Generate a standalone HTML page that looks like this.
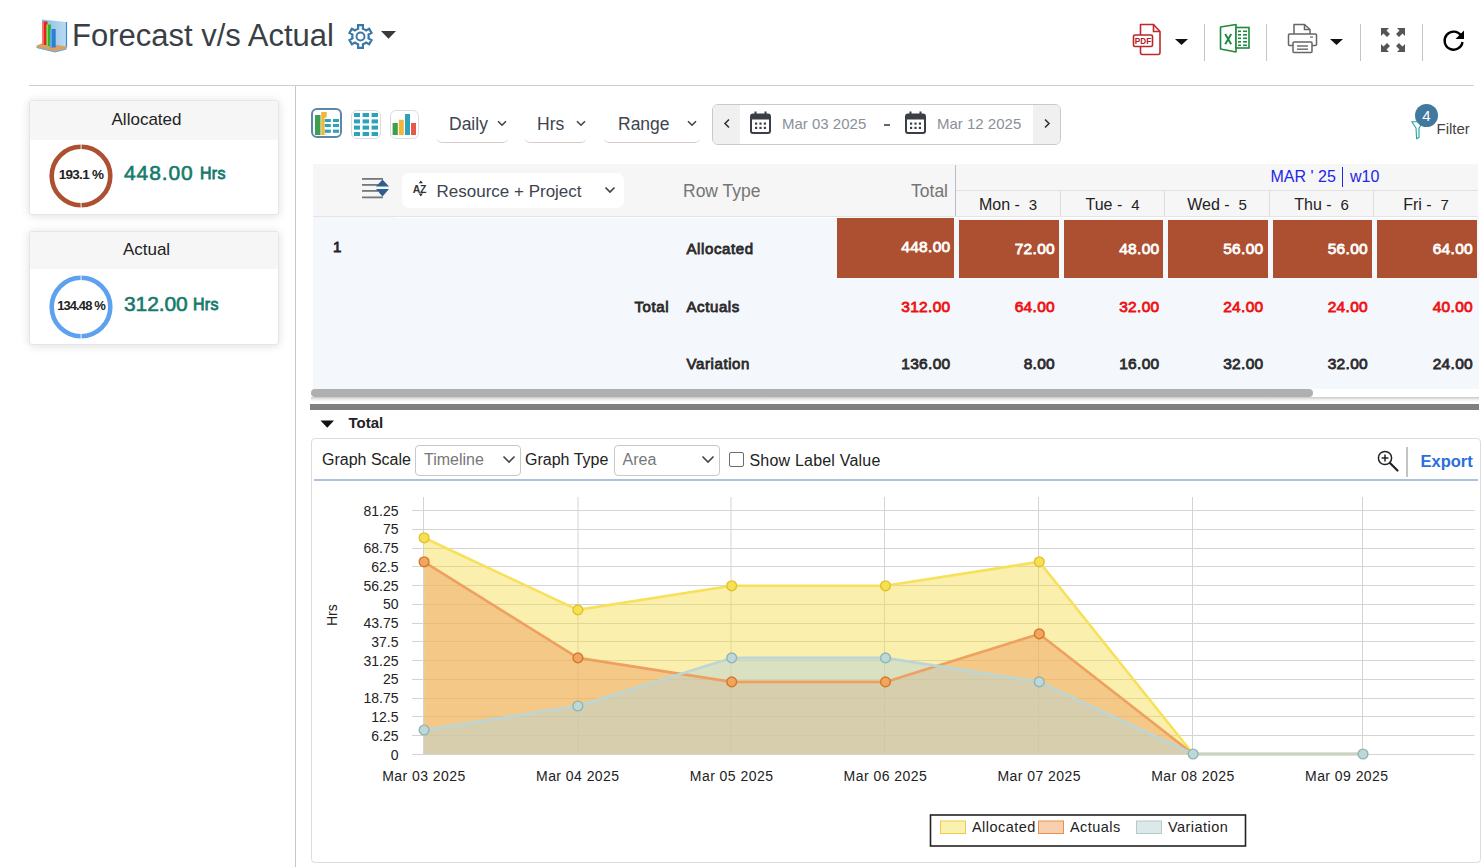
<!DOCTYPE html>
<html>
<head>
<meta charset="utf-8">
<style>
html,body{margin:0;padding:0;background:#fff;}
body{width:1482px;height:867px;position:relative;overflow:hidden;font-family:"Liberation Sans",sans-serif;color:#222;}
.a{position:absolute;}
.t{position:absolute;white-space:nowrap;line-height:1;}
.b{font-weight:bold;}
.sb{font-weight:normal;-webkit-text-stroke:0.8px currentColor;letter-spacing:0.3px;}
.r{text-align:right;}
.c{text-align:center;}
svg{position:absolute;overflow:visible;}
</style>
</head>
<body>
<!-- ===== HEADER ===== -->
<svg class="a" style="left:34px;top:18px" width="36" height="36" viewBox="0 0 36 36">
  <defs><linearGradient id="pg" x1="0" x2="1" y1="0" y2="0"><stop offset="0" stop-color="#86bbe4"/><stop offset="1" stop-color="#bddbf0"/></linearGradient></defs>
  <polygon points="8,1.5 32.5,4 32.5,29.5 8,27" fill="url(#pg)"/>
  <line x1="32.5" y1="4" x2="32.5" y2="29.5" stroke="#3a8ad0" stroke-width="1.2"/>
  <polygon points="2.5,27.5 9,25 32.5,28.5 32.5,31 21,34 2.5,29.5" fill="#d9a066"/>
  <polyline points="2.5,29.5 21,34 32.5,31" fill="none" stroke="#6aa8d8" stroke-width="1.2"/>
  <rect x="8.2" y="3.5" width="5.3" height="23.5" fill="#e8201e"/><rect x="8.2" y="3.5" width="1.6" height="23.5" fill="#ff8080"/>
  <rect x="12.5" y="6.5" width="4.5" height="21.5" fill="#33b22a"/><rect x="12.5" y="6.5" width="1.4" height="21.5" fill="#8ee06a"/>
  <rect x="16.2" y="11" width="5.5" height="18.5" fill="#2f7fd0"/><rect x="16.2" y="11" width="1.5" height="18.5" fill="#6ab4f0"/>
</svg>
<div class="t" style="left:72px;top:20px;font-size:31px;color:#3a3f47;">Forecast v/s Actual</div>
<!-- gear -->
<svg style="left:348px;top:24px" width="25" height="25" viewBox="0 0 25 25">
  <path d="M8.40 5.40 L10.10 4.66 L10.09 1.15 L14.91 1.15 L14.90 4.66 L16.60 5.40 L18.09 6.50 L21.12 4.74 L23.53 8.92 L20.49 10.66 L20.70 12.50 L20.49 14.34 L23.53 16.08 L21.12 20.26 L18.09 18.50 L16.60 19.60 L14.90 20.34 L14.91 23.85 L10.09 23.85 L10.10 20.34 L8.40 19.60 L6.91 18.50 L3.88 20.26 L1.47 16.08 L4.51 14.34 L4.30 12.50 L4.51 10.66 L1.47 8.92 L3.88 4.74 L6.91 6.50 Z" fill="none" stroke="#3a78a6" stroke-width="2.2" stroke-linejoin="miter"/>
  <circle cx="12.5" cy="12.5" r="4" fill="none" stroke="#3a78a6" stroke-width="1.9"/>
</svg>
<svg style="left:380.5px;top:31px" width="15" height="8" viewBox="0 0 15 8"><polygon points="0,0 15,0 7.5,7.8" fill="#3a3a3a"/></svg>

<!-- right icons -->
<!-- pdf -->
<svg style="left:1132px;top:23px" width="32" height="33" viewBox="0 0 32 33">
  <path d="M8.5 1.5h13l6.5 7v21a2 2 0 0 1-2 2h-15.5a2 2 0 0 1-2-2z" fill="#fff" stroke="#c0282d" stroke-width="1.6" stroke-linejoin="round"/>
  <path d="M21.5 1.5v7h6.5" fill="none" stroke="#c0282d" stroke-width="1.6"/>
  <rect x="1.5" y="12" width="19" height="11.5" rx="1.5" fill="#fff" stroke="#b8262b" stroke-width="1.6"/>
  <text x="11" y="21.3" font-family="Liberation Sans" font-weight="bold" font-size="8.2" fill="#b02025" text-anchor="middle">PDF</text>
</svg>
<svg style="left:1175px;top:39px" width="13" height="6" viewBox="0 0 13 6"><polygon points="0,0 13,0 6.5,6" fill="#111"/></svg>
<div class="a" style="left:1204px;top:24px;width:1px;height:37px;background:#c4c4c4"></div>
<!-- excel -->
<svg style="left:1219px;top:23px" width="32" height="31" viewBox="0 0 32 31">
  <polygon points="1.5,4 17,1.5 17,29 1.5,26" fill="#fff" stroke="#1e8a3e" stroke-width="1.6" stroke-linejoin="round"/>
  <rect x="17" y="4.5" width="13" height="20.5" fill="#fff" stroke="#1e8a3e" stroke-width="1.6"/>
  <path d="M6.2 11l6 10.2M12.2 11l-6 10.2" stroke="#1e8a3e" stroke-width="1.9" fill="none"/>
  <g fill="#1e8a3e"><rect x="19" y="7.5" width="3" height="1.6"/><rect x="24" y="7.5" width="4" height="1.6"/>
  <rect x="19" y="11" width="3" height="1.6"/><rect x="24" y="11" width="4" height="1.6"/>
  <rect x="19" y="14.5" width="3" height="1.6"/><rect x="24" y="14.5" width="4" height="1.6"/>
  <rect x="19" y="18" width="3" height="1.6"/><rect x="24" y="18" width="4" height="1.6"/>
  <rect x="19" y="21.5" width="3" height="1.6"/><rect x="24" y="21.5" width="4" height="1.6"/></g>
</svg>
<div class="a" style="left:1266px;top:24px;width:1px;height:37px;background:#c4c4c4"></div>
<!-- printer -->
<svg style="left:1287px;top:23px" width="31" height="31" viewBox="0 0 31 31">
  <path d="M7 11v-9.5h10.5l5.5 5v4.5" fill="#fff" stroke="#666" stroke-width="1.5" stroke-linejoin="round"/>
  <path d="M17.5 1.5v5h5.5" fill="none" stroke="#666" stroke-width="1.5"/>
  <rect x="1.5" y="11" width="28" height="11.5" rx="1" fill="#fff" stroke="#666" stroke-width="1.5"/>
  <rect x="6" y="19" width="19" height="10.5" rx="1" fill="#fff" stroke="#666" stroke-width="1.5"/>
  <rect x="10" y="22.3" width="11" height="1.4" fill="#666"/><rect x="10" y="25.5" width="11" height="1.4" fill="#666"/>
  <rect x="23" y="13.5" width="3" height="1.2" fill="#666"/>
</svg>
<svg style="left:1330px;top:39px" width="13" height="6" viewBox="0 0 13 6"><polygon points="0,0 13,0 6.5,6" fill="#111"/></svg>
<div class="a" style="left:1360px;top:24px;width:1px;height:37px;background:#c4c4c4"></div>
<!-- expand -->
<svg style="left:1380px;top:27px" width="26" height="26" viewBox="0 0 26 26">
  <g fill="#555">
   <polygon points="1,1 9,1 6.5,3.5 10,7 7,10 3.5,6.5 1,9"/>
   <polygon points="25,1 17,1 19.5,3.5 16,7 19,10 22.5,6.5 25,9"/>
   <polygon points="1,25 9,25 6.5,22.5 10,19 7,16 3.5,19.5 1,17"/>
   <polygon points="25,25 17,25 19.5,22.5 16,19 19,16 22.5,19.5 25,17"/>
  </g>
</svg>
<div class="a" style="left:1422px;top:24px;width:1px;height:37px;background:#c4c4c4"></div>
<!-- refresh -->
<svg style="left:1442px;top:29px" width="24" height="23" viewBox="0 0 24 23">
  <path d="M19 6.5A9 9 0 1 0 20.5 13" fill="none" stroke="#000" stroke-width="2.4"/>
  <polygon points="22,1.5 22,10 13.5,10" fill="#000"/>
</svg>

<div class="a" style="left:29px;top:85px;width:1445px;height:1px;background:#cfcfcf"></div>
<div class="a" style="left:295px;top:86px;width:1px;height:781px;background:#c6c6c6"></div>

<!-- ===== LEFT CARDS ===== -->
<div class="a" style="left:29px;top:100px;width:248px;height:113px;border:1px solid #e6e6e6;border-radius:3px;background:#fff;box-shadow:0 1px 10px rgba(0,0,0,0.13);overflow:hidden">
  <div class="a" style="left:0;top:0;width:248px;height:39px;background:#f6f6f6"></div>
</div>
<div class="t" style="left:30px;width:233px;top:111px;font-size:17px;text-align:center;color:#222">Allocated</div>
<svg style="left:49px;top:144px" width="64" height="64" viewBox="0 0 64 64">
  <circle cx="32" cy="32" r="29.3" fill="none" stroke="#ad4f31" stroke-width="4.6"/>
  <rect x="31.6" y="0" width="0.9" height="6" fill="#fff"/>
  <rect x="31.6" y="58" width="0.9" height="6" fill="#fff"/>
</svg>
<div class="t b" style="left:49px;width:64px;top:168px;font-size:13.5px;text-align:center;color:#222;letter-spacing:-0.7px">193.1 %</div>
<div class="t" style="left:124px;top:162px;font-size:21px;color:#167a6c;letter-spacing:0.9px;-webkit-text-stroke:0.6px #167a6c">448.00</div>
<div class="t sb" style="left:200px;top:166px;font-size:16px;color:#167a6c">Hrs</div>

<div class="a" style="left:29px;top:231px;width:248px;height:112px;border:1px solid #e6e6e6;border-radius:3px;background:#fff;box-shadow:0 1px 10px rgba(0,0,0,0.13);overflow:hidden">
  <div class="a" style="left:0;top:0;width:248px;height:37px;background:#f6f6f6"></div>
</div>
<div class="t" style="left:30px;width:233px;top:241px;font-size:17px;text-align:center;color:#222">Actual</div>
<svg style="left:49px;top:275px" width="64" height="64" viewBox="0 0 64 64">
  <circle cx="32" cy="32" r="29.3" fill="none" stroke="#5ea1ee" stroke-width="4.6"/>
  <rect x="31.6" y="0" width="0.9" height="6" fill="#fff"/>
  <rect x="31.6" y="58" width="0.9" height="6" fill="#fff"/>
</svg>
<div class="t b" style="left:47px;width:68px;top:299px;font-size:13px;text-align:center;color:#222;letter-spacing:-0.9px">134.48 %</div>
<div class="t" style="left:124px;top:293px;font-size:21px;color:#167a6c;letter-spacing:-0.1px;-webkit-text-stroke:0.6px #167a6c">312.00</div>
<div class="t sb" style="left:193px;top:297px;font-size:16px;color:#167a6c">Hrs</div>

<!-- ===== TOOLBAR ===== -->
<!-- view icons -->
<div class="a" style="left:311px;top:108px;width:26.6px;height:25.6px;border:2.7px solid #5a87aa;border-radius:6px;background:#fff"></div>
<svg style="left:311px;top:108px" width="32" height="31" viewBox="0 0 32 31">
  <rect x="4" y="7" width="5.5" height="20" fill="#3e9e4f"/>
  <rect x="10.2" y="4" width="5.6" height="23" fill="#f1b73b"/>
  <g fill="#fff"><rect x="13.6" y="9.5" width="15" height="17"/></g>
  <g fill="#2ca3b8">
   <rect x="13.8" y="11" width="6" height="3"/><rect x="22" y="11" width="6" height="3"/>
   <rect x="13.8" y="16" width="6" height="3"/><rect x="22" y="16" width="6" height="3"/>
   <rect x="13.8" y="21.6" width="6" height="3.2"/><rect x="22" y="21.6" width="6" height="3.2"/>
  </g>
</svg>
<div class="a" style="left:351px;top:110px;width:28px;height:27px;border:1.5px solid #dcdcdc;border-radius:6px;background:#fff"></div>
<svg style="left:351px;top:110px" width="31" height="30" viewBox="0 0 31 30">
  <g fill="#2ca3b8">
   <rect x="3" y="3" width="6" height="4"/><rect x="11.6" y="3" width="6.4" height="4"/><rect x="20.6" y="3" width="6.4" height="4"/>
   <rect x="3" y="9.4" width="6" height="4"/><rect x="11.6" y="9.4" width="6.4" height="4"/><rect x="20.6" y="9.4" width="6.4" height="4"/>
   <rect x="3" y="15.6" width="6" height="4"/><rect x="11.6" y="15.6" width="6.4" height="4"/><rect x="20.6" y="15.6" width="6.4" height="4"/>
   <rect x="3" y="22" width="6" height="4"/><rect x="11.6" y="22" width="6.4" height="4"/><rect x="20.6" y="22" width="6.4" height="4"/>
  </g>
</svg>
<div class="a" style="left:390px;top:110px;width:27px;height:27px;border:1.5px solid #dcdcdc;border-radius:6px;background:#fff"></div>
<svg style="left:390px;top:110px" width="30" height="30" viewBox="0 0 30 30">
  <rect x="2.6" y="13" width="5.2" height="12" fill="#3e9e4f"/>
  <rect x="8.8" y="9.8" width="5" height="15.2" fill="#f1b73b"/>
  <rect x="15" y="4" width="5" height="21" fill="#2ca3b8"/>
  <rect x="21" y="13" width="5" height="12" fill="#e5584a"/>
</svg>

<!-- dropdowns -->
<div class="a" style="left:437px;top:131px;width:71px;height:11px;border-bottom:1.3px solid #d9c9c9;border-radius:0 0 5px 5px"></div>
<div class="t" style="left:449px;top:115.5px;font-size:17.5px;color:#3d4450">Daily</div>
<svg style="left:497px;top:120px" width="10" height="7" viewBox="0 0 10 7"><path d="M1 1.2l4 4 4-4" fill="none" stroke="#3d4450" stroke-width="1.6"/></svg>

<div class="a" style="left:525px;top:131px;width:61px;height:11px;border-bottom:1.3px solid #d9c9c9;border-radius:0 0 5px 5px"></div>
<div class="t" style="left:537px;top:115.5px;font-size:17.5px;color:#3d4450">Hrs</div>
<svg style="left:576px;top:120px" width="10" height="7" viewBox="0 0 10 7"><path d="M1 1.2l4 4 4-4" fill="none" stroke="#3d4450" stroke-width="1.6"/></svg>

<div class="a" style="left:604px;top:131px;width:96px;height:11px;border-bottom:1.3px solid #d9c9c9;border-radius:0 0 5px 5px"></div>
<div class="t" style="left:618px;top:115.5px;font-size:17.5px;color:#3d4450">Range</div>
<svg style="left:687px;top:120px" width="10" height="7" viewBox="0 0 10 7"><path d="M1 1.2l4 4 4-4" fill="none" stroke="#3d4450" stroke-width="1.6"/></svg>

<!-- date range -->
<div class="a" style="left:712px;top:104px;width:347px;height:39px;border:1px solid #c9c9c9;border-radius:6px;background:#fff;overflow:hidden">
  <div class="a" style="left:0;top:0;width:27px;height:39px;background:#f0f0f0"></div>
  <div class="a" style="left:320px;top:0;width:27px;height:39px;background:#f0f0f0"></div>
</div>
<svg style="left:723px;top:118px" width="8" height="11" viewBox="0 0 8 11"><path d="M6 1.5L2 5.5l4 4" fill="none" stroke="#333" stroke-width="1.6"/></svg>
<svg style="left:1043px;top:118px" width="8" height="11" viewBox="0 0 8 11"><path d="M2 1.5l4 4-4 4" fill="none" stroke="#333" stroke-width="1.6"/></svg>
<svg style="left:750px;top:111px" width="21" height="23" viewBox="0 0 21 23">
  <rect x="1" y="3.5" width="19" height="18.5" rx="2" fill="#fff" stroke="#3a3f47" stroke-width="2"/>
  <rect x="1" y="3.5" width="19" height="5" fill="#3a3f47"/>
  <rect x="4.5" y="0.5" width="2" height="4" fill="#3a3f47"/><rect x="14.5" y="0.5" width="2" height="4" fill="#3a3f47"/>
  <g fill="#3a3f47"><rect x="5" y="11.5" width="2.2" height="2.2"/><rect x="9.4" y="11.5" width="2.2" height="2.2"/><rect x="13.8" y="11.5" width="2.2" height="2.2"/>
  <rect x="5" y="15.8" width="2.2" height="2.2"/><rect x="9.4" y="15.8" width="2.2" height="2.2"/><rect x="13.8" y="15.8" width="2.2" height="2.2"/></g>
</svg>
<svg style="left:904.5px;top:111px" width="21" height="23" viewBox="0 0 21 23">
  <rect x="1" y="3.5" width="19" height="18.5" rx="2" fill="#fff" stroke="#3a3f47" stroke-width="2"/>
  <rect x="1" y="3.5" width="19" height="5" fill="#3a3f47"/>
  <rect x="4.5" y="0.5" width="2" height="4" fill="#3a3f47"/><rect x="14.5" y="0.5" width="2" height="4" fill="#3a3f47"/>
  <g fill="#3a3f47"><rect x="5" y="11.5" width="2.2" height="2.2"/><rect x="9.4" y="11.5" width="2.2" height="2.2"/><rect x="13.8" y="11.5" width="2.2" height="2.2"/>
  <rect x="5" y="15.8" width="2.2" height="2.2"/><rect x="9.4" y="15.8" width="2.2" height="2.2"/><rect x="13.8" y="15.8" width="2.2" height="2.2"/></g>
</svg>
<div class="t" style="left:782px;top:116px;font-size:15px;color:#8b9099">Mar 03 2025</div>
<div class="a" style="left:884px;top:124px;width:6px;height:1.6px;background:#666"></div>
<div class="t" style="left:937px;top:116px;font-size:15px;color:#8b9099">Mar 12 2025</div>

<!-- filter -->
<svg style="left:1411px;top:121px" width="14" height="19" viewBox="0 0 14 19">
  <path d="M0.8 0.8h11.5l-4.3 6.2v9.6l-2.4 1.2-0.6-10.8z" fill="#fff" stroke="#1aa59a" stroke-width="1.1" stroke-linejoin="round"/>
</svg>
<div class="a" style="left:1415px;top:104px;width:23px;height:23px;border-radius:50%;background:#41789e"></div>
<div class="t" style="left:1415px;width:23px;top:107.5px;font-size:15px;color:#fff;text-align:center">4</div>
<div class="t" style="left:1436.5px;top:121px;font-size:15px;color:#444">Filter</div>

<!-- ===== TABLE ===== -->
<div class="a" style="left:313px;top:164px;width:1165px;height:52px;background:#f6f6f6"></div>
<div class="a" style="left:313px;top:216px;width:1165px;height:1.5px;background:#e4e4e4"></div>
<div class="a" style="left:313px;top:217px;width:1166px;height:172px;background:#f4f7fc"></div>
<div class="a" style="left:395px;top:216.5px;width:1083px;height:1.5px;background:#fff"></div>
<!-- sort icon -->
<svg style="left:361px;top:177px" width="30" height="23" viewBox="0 0 30 23">
  <g fill="#777"><rect x="1" y="1" width="21" height="1.8"/><rect x="1" y="7" width="16" height="1.8"/><rect x="1" y="13" width="16" height="1.8"/><rect x="1" y="19.5" width="21" height="1.8"/></g>
  <polygon points="21.5,2.5 28,9.6 15,9.6" fill="#2f5f90"/>
  <polygon points="15,12 28,12 21.5,19.4" fill="#2f5f90"/>
</svg>
<div class="a" style="left:402px;top:173px;width:222px;height:35px;background:#fff;border-radius:7px"></div>
<svg style="left:412px;top:178px" width="17" height="19" viewBox="0 0 17 19">
  <text x="0.8" y="14.7" font-family="Liberation Sans" font-weight="bold" font-size="10.5" fill="#333">A</text>
  <text x="8" y="14.7" font-family="Liberation Sans" font-weight="bold" font-size="10.5" fill="#333">Z</text>
  <polygon points="8.8,2.6 6.6,5.2 11,5.2" fill="#333"/>
  <polygon points="6.6,15.6 11,15.6 8.8,18.6" fill="#333"/>
</svg>
<div class="t" style="left:436.5px;top:182.5px;font-size:17px;color:#3d4450">Resource + Project</div>
<svg style="left:604px;top:186px" width="12" height="8" viewBox="0 0 12 8"><path d="M1.5 1.5l4.5 4.5 4.5-4.5" fill="none" stroke="#3d4450" stroke-width="1.7"/></svg>
<div class="t" style="left:683px;top:182.5px;font-size:17.5px;color:#757575">Row Type</div>
<div class="t r" style="left:847px;width:101px;top:182.5px;font-size:17.5px;color:#757575">Total</div>
<div class="a" style="left:955px;top:165px;width:1.2px;height:51px;background:#b4bfcf"></div>
<div class="a" style="left:956px;top:190px;width:522px;height:1px;background:#e2e2e2"></div>
<div class="a" style="left:1060px;top:191px;width:1px;height:25px;background:#dddddd"></div>
<div class="a" style="left:1164px;top:191px;width:1px;height:25px;background:#dddddd"></div>
<div class="a" style="left:1269px;top:191px;width:1px;height:25px;background:#dddddd"></div>
<div class="a" style="left:1373px;top:191px;width:1px;height:25px;background:#dddddd"></div>
<div class="t" style="left:1270.5px;top:169px;font-size:16px;color:#2525e6">MAR ' 25</div>
<div class="a" style="left:1342px;top:167px;width:1px;height:20px;background:#2525e6"></div>
<div class="t" style="left:1350px;top:169px;font-size:16px;color:#2525e6">w10</div>
<div class="t c" style="left:956px;width:104px;top:197px;font-size:16px;color:#222">Mon -&nbsp;&nbsp;<span style="font-size:15px">3</span></div>
<div class="t c" style="left:1061px;width:103px;top:197px;font-size:16px;color:#222">Tue -&nbsp;&nbsp;<span style="font-size:15px">4</span></div>
<div class="t c" style="left:1165px;width:104px;top:197px;font-size:16px;color:#222">Wed -&nbsp;&nbsp;<span style="font-size:15px">5</span></div>
<div class="t c" style="left:1270px;width:103px;top:197px;font-size:16px;color:#222">Thu -&nbsp;&nbsp;<span style="font-size:15px">6</span></div>
<div class="t c" style="left:1374px;width:104px;top:197px;font-size:16px;color:#222">Fri -&nbsp;&nbsp;<span style="font-size:15px">7</span></div>

<!-- red cells -->
<div class="a" style="left:837px;top:218px;width:117px;height:60px;background:#ad4f31"></div>
<div class="a" style="left:959px;top:220px;width:100px;height:58px;background:#ad4f31"></div>
<div class="a" style="left:1064px;top:220px;width:99px;height:58px;background:#ad4f31"></div>
<div class="a" style="left:1168px;top:220px;width:100px;height:58px;background:#ad4f31"></div>
<div class="a" style="left:1273px;top:220px;width:99px;height:58px;background:#ad4f31"></div>
<div class="a" style="left:1377px;top:220px;width:100px;height:58px;background:#ad4f31"></div>

<!-- row labels -->
<div class="t sb" style="left:333px;top:238.5px;font-size:15px;color:#222">1</div>
<div class="t sb" style="left:686.5px;top:240.5px;font-size:15px;color:#2a2a2a;letter-spacing:0.6px">Allocated</div>
<div class="t sb r" style="left:568px;width:101.2px;top:298.5px;font-size:15px;color:#2a2a2a;letter-spacing:0.6px">Total</div>
<div class="t sb" style="left:686.5px;top:298.5px;font-size:15px;color:#2a2a2a;letter-spacing:0.6px">Actuals</div>
<div class="t sb" style="left:686.5px;top:355.5px;font-size:15px;color:#2a2a2a;letter-spacing:0.6px">Variation</div>

<!-- values row 1 -->
<div class="t sb r" style="left:850px;width:100.5px;top:239px;font-size:15.5px;color:#fff">448.00</div>
<div class="t sb r" style="left:955px;width:100px;top:241px;font-size:15.5px;color:#fff">72.00</div>
<div class="t sb r" style="left:1060px;width:99.5px;top:241px;font-size:15.5px;color:#fff">48.00</div>
<div class="t sb r" style="left:1164px;width:99.5px;top:241px;font-size:15.5px;color:#fff">56.00</div>
<div class="t sb r" style="left:1268px;width:100px;top:241px;font-size:15.5px;color:#fff">56.00</div>
<div class="t sb r" style="left:1373px;width:100px;top:241px;font-size:15.5px;color:#fff">64.00</div>
<!-- values row 2 -->
<div class="t sb r" style="left:850px;width:100.5px;top:299px;font-size:15.5px;color:#ee1111">312.00</div>
<div class="t sb r" style="left:955px;width:100px;top:299px;font-size:15.5px;color:#ee1111">64.00</div>
<div class="t sb r" style="left:1060px;width:99.5px;top:299px;font-size:15.5px;color:#ee1111">32.00</div>
<div class="t sb r" style="left:1164px;width:99.5px;top:299px;font-size:15.5px;color:#ee1111">24.00</div>
<div class="t sb r" style="left:1268px;width:100px;top:299px;font-size:15.5px;color:#ee1111">24.00</div>
<div class="t sb r" style="left:1373px;width:100px;top:299px;font-size:15.5px;color:#ee1111">40.00</div>
<!-- values row 3 -->
<div class="t sb r" style="left:850px;width:100.5px;top:356px;font-size:15.5px;color:#2a2a2a">136.00</div>
<div class="t sb r" style="left:955px;width:100px;top:356px;font-size:15.5px;color:#2a2a2a">8.00</div>
<div class="t sb r" style="left:1060px;width:99.5px;top:356px;font-size:15.5px;color:#2a2a2a">16.00</div>
<div class="t sb r" style="left:1164px;width:99.5px;top:356px;font-size:15.5px;color:#2a2a2a">32.00</div>
<div class="t sb r" style="left:1268px;width:100px;top:356px;font-size:15.5px;color:#2a2a2a">32.00</div>
<div class="t sb r" style="left:1373px;width:100px;top:356px;font-size:15.5px;color:#2a2a2a">24.00</div>

<!-- scrollbar -->
<div class="a" style="left:311px;top:397px;width:1168px;height:5px;background:linear-gradient(#c8c8c8,#f4f4f4 60%,#fff)"></div>
<div class="a" style="left:311px;top:389px;width:1002px;height:8px;border-radius:4px;background:#b0b0b0"></div>
<div class="a" style="left:310px;top:404px;width:1169px;height:6px;background:#808080"></div>
<svg style="left:320px;top:420px" width="15" height="8" viewBox="0 0 15 8"><polygon points="0.5,0.5 14,0.5 7.25,7.8" fill="#111"/></svg>
<div class="t b" style="left:348.5px;top:414.5px;font-size:15px;color:#222">Total</div>

<!-- ===== CHART ===== -->
<div class="a" style="left:311px;top:438px;width:1168px;height:423px;border:1px solid #dcdcdc;border-radius:4px;background:#fff"></div>
<div class="t" style="left:322px;top:451.5px;font-size:16px;color:#222">Graph Scale</div>
<div class="a" style="left:415px;top:445px;width:104px;height:29px;border:1px solid #c8c8c8;border-radius:4px;background:#fff"></div>
<div class="t" style="left:424px;top:451.5px;font-size:16px;color:#777">Timeline</div>
<svg style="left:502px;top:455px" width="14" height="9" viewBox="0 0 14 9"><path d="M1.5 1.5l5.5 5.5 5.5-5.5" fill="none" stroke="#444" stroke-width="1.6"/></svg>
<div class="t" style="left:525px;top:451.5px;font-size:16px;color:#222">Graph Type</div>
<div class="a" style="left:614px;top:445px;width:104px;height:29px;border:1px solid #c8c8c8;border-radius:4px;background:#fff"></div>
<div class="t" style="left:622.5px;top:451.5px;font-size:16px;color:#777">Area</div>
<svg style="left:701px;top:455px" width="14" height="9" viewBox="0 0 14 9"><path d="M1.5 1.5l5.5 5.5 5.5-5.5" fill="none" stroke="#444" stroke-width="1.6"/></svg>
<div class="a" style="left:729px;top:452px;width:12.5px;height:12.5px;border:1px solid #6b6b6b;border-radius:2px;background:#fff"></div>
<div class="t" style="left:749.5px;top:452.5px;font-size:16px;color:#222;letter-spacing:0.2px">Show Label Value</div>
<svg style="left:1376px;top:449px" width="24" height="24" viewBox="0 0 24 24">
  <circle cx="9" cy="9" r="6.6" fill="none" stroke="#222" stroke-width="1.5"/>
  <path d="M9 5.6v6.8M5.6 9h6.8" stroke="#222" stroke-width="1.5"/>
  <path d="M14 14l7.5 7.5" stroke="#222" stroke-width="2.2" stroke-linecap="round"/>
</svg>
<div class="a" style="left:1406px;top:447px;width:1.5px;height:30px;background:#c4c4c4"></div>
<div class="t b" style="left:1420.5px;top:452.5px;font-size:16.5px;color:#2a6fdb">Export</div>
<div class="a" style="left:314px;top:479px;width:1164px;height:2px;background:#a9c1de"></div>
<svg style="left:0;top:0" width="1482" height="867" viewBox="0 0 1482 867">
<g stroke="#d4d4d4" stroke-width="1"><line x1="412" y1="754.5" x2="1474.5" y2="754.5"/><line x1="412" y1="735.5" x2="1474.5" y2="735.5"/><line x1="412" y1="716.5" x2="1474.5" y2="716.5"/><line x1="412" y1="698.5" x2="1474.5" y2="698.5"/><line x1="412" y1="679.5" x2="1474.5" y2="679.5"/><line x1="412" y1="660.5" x2="1474.5" y2="660.5"/><line x1="412" y1="641.5" x2="1474.5" y2="641.5"/><line x1="412" y1="623.5" x2="1474.5" y2="623.5"/><line x1="412" y1="604.5" x2="1474.5" y2="604.5"/><line x1="412" y1="585.5" x2="1474.5" y2="585.5"/><line x1="412" y1="566.5" x2="1474.5" y2="566.5"/><line x1="412" y1="548.5" x2="1474.5" y2="548.5"/><line x1="412" y1="529.5" x2="1474.5" y2="529.5"/><line x1="412" y1="510.5" x2="1474.5" y2="510.5"/><line x1="423.5" y1="497" x2="423.5" y2="754"/><line x1="578" y1="497" x2="578" y2="754"/><line x1="731" y1="497" x2="731" y2="754"/><line x1="884.5" y1="497" x2="884.5" y2="754"/><line x1="1038.5" y1="497" x2="1038.5" y2="754"/><line x1="1192.5" y1="497" x2="1192.5" y2="754"/><line x1="1362.5" y1="497" x2="1362.5" y2="754"/></g>
<g font-family="Liberation Sans" font-size="14" fill="#222" text-anchor="end"><text x="398.5" y="759.5">0</text><text x="398.5" y="740.7">6.25</text><text x="398.5" y="722.0">12.5</text><text x="398.5" y="703.2">18.75</text><text x="398.5" y="684.4">25</text><text x="398.5" y="665.7">31.25</text><text x="398.5" y="646.9">37.5</text><text x="398.5" y="628.1">43.75</text><text x="398.5" y="609.3">50</text><text x="398.5" y="590.6">56.25</text><text x="398.5" y="571.8">62.5</text><text x="398.5" y="553.0">68.75</text><text x="398.5" y="534.3">75</text><text x="398.5" y="515.5">81.25</text></g>
<g font-family="Liberation Sans" font-size="14" fill="#222" text-anchor="middle" letter-spacing="0.45"><text x="424" y="781">Mar 03 2025</text><text x="577.8" y="781">Mar 04 2025</text><text x="731.6" y="781">Mar 05 2025</text><text x="885.4" y="781">Mar 06 2025</text><text x="1039.2" y="781">Mar 07 2025</text><text x="1193" y="781">Mar 08 2025</text><text x="1346.8" y="781">Mar 09 2025</text></g>
<text transform="translate(337,626) rotate(-90)" font-family="Liberation Sans" font-size="14" fill="#222">Hrs</text>
<polygon points="424.1,754 424.1,537.8 577.9,609.9 731.7,585.8 885.5,585.8 1039.3,561.8 1193.1,754.0 1363.0,754.0 1363.0,754" fill="#f5dc4a" fill-opacity="0.45"/>
<polygon points="424.1,754 424.1,561.8 577.9,657.9 731.7,681.9 885.5,681.9 1039.3,633.9 1193.1,754.0 1363.0,754.0 1363.0,754" fill="#eea160" fill-opacity="0.5"/>
<polygon points="424.1,754 424.1,730.0 577.9,706.0 731.7,657.9 885.5,657.9 1039.3,681.9 1193.1,754.0 1363.0,754.0 1363.0,754" fill="#b8d4d4" fill-opacity="0.5"/>
<polyline points="424.1,537.8 577.9,609.9 731.7,585.8 885.5,585.8 1039.3,561.8 1193.1,754.0 1363.0,754.0" fill="none" stroke="#f7e05a" stroke-width="2.6" stroke-linejoin="round"/>
<polyline points="424.1,561.8 577.9,657.9 731.7,681.9 885.5,681.9 1039.3,633.9 1193.1,754.0 1363.0,754.0" fill="none" stroke="#eea060" stroke-width="2.6" stroke-linejoin="round"/>
<polyline points="424.1,730.0 577.9,706.0 731.7,657.9 885.5,657.9 1039.3,681.9 1193.1,754.0 1363.0,754.0" fill="none" stroke="#bcd6d6" stroke-width="2.6" stroke-linejoin="round"/>
<circle cx="424.1" cy="537.8" r="4.9" fill="#f5e052" stroke="#e2c22a" stroke-width="1.4"/><circle cx="577.9" cy="609.9" r="4.9" fill="#f5e052" stroke="#e2c22a" stroke-width="1.4"/><circle cx="731.7" cy="585.8" r="4.9" fill="#f5e052" stroke="#e2c22a" stroke-width="1.4"/><circle cx="885.5" cy="585.8" r="4.9" fill="#f5e052" stroke="#e2c22a" stroke-width="1.4"/><circle cx="1039.3" cy="561.8" r="4.9" fill="#f5e052" stroke="#e2c22a" stroke-width="1.4"/>
<circle cx="424.1" cy="561.8" r="4.9" fill="#f0a560" stroke="#d5782a" stroke-width="1.4"/><circle cx="577.9" cy="657.9" r="4.9" fill="#f0a560" stroke="#d5782a" stroke-width="1.4"/><circle cx="731.7" cy="681.9" r="4.9" fill="#f0a560" stroke="#d5782a" stroke-width="1.4"/><circle cx="885.5" cy="681.9" r="4.9" fill="#f0a560" stroke="#d5782a" stroke-width="1.4"/><circle cx="1039.3" cy="633.9" r="4.9" fill="#f0a560" stroke="#d5782a" stroke-width="1.4"/>
<circle cx="424.1" cy="730.0" r="4.9" fill="#bed8d8" stroke="#8fb5b5" stroke-width="1.4"/><circle cx="577.9" cy="706.0" r="4.9" fill="#bed8d8" stroke="#8fb5b5" stroke-width="1.4"/><circle cx="731.7" cy="657.9" r="4.9" fill="#bed8d8" stroke="#8fb5b5" stroke-width="1.4"/><circle cx="885.5" cy="657.9" r="4.9" fill="#bed8d8" stroke="#8fb5b5" stroke-width="1.4"/><circle cx="1039.3" cy="681.9" r="4.9" fill="#bed8d8" stroke="#8fb5b5" stroke-width="1.4"/><circle cx="1193.1" cy="754.0" r="4.9" fill="#bed8d8" stroke="#8fb5b5" stroke-width="1.4"/><circle cx="1363.0" cy="754.0" r="4.9" fill="#bed8d8" stroke="#8fb5b5" stroke-width="1.4"/>
<rect x="930.5" y="815" width="315" height="31" fill="#fff" stroke="#222" stroke-width="1.6"/>
<rect x="940.5" y="821" width="25" height="12.5" fill="#faf0b0" stroke="#ebcd48" stroke-width="1"/>
<rect x="1038.5" y="821" width="25" height="12.5" fill="#f8d0b0" stroke="#e8914e" stroke-width="1"/>
<rect x="1136.5" y="821" width="25" height="12.5" fill="#dde9e8" stroke="#b0cccc" stroke-width="1"/>
<g font-family="Liberation Sans" font-size="14.5" fill="#222" letter-spacing="0.45"><text x="972" y="832">Allocated</text><text x="1070" y="832">Actuals</text><text x="1168" y="832">Variation</text></g>
</svg>
</body>
</html>
